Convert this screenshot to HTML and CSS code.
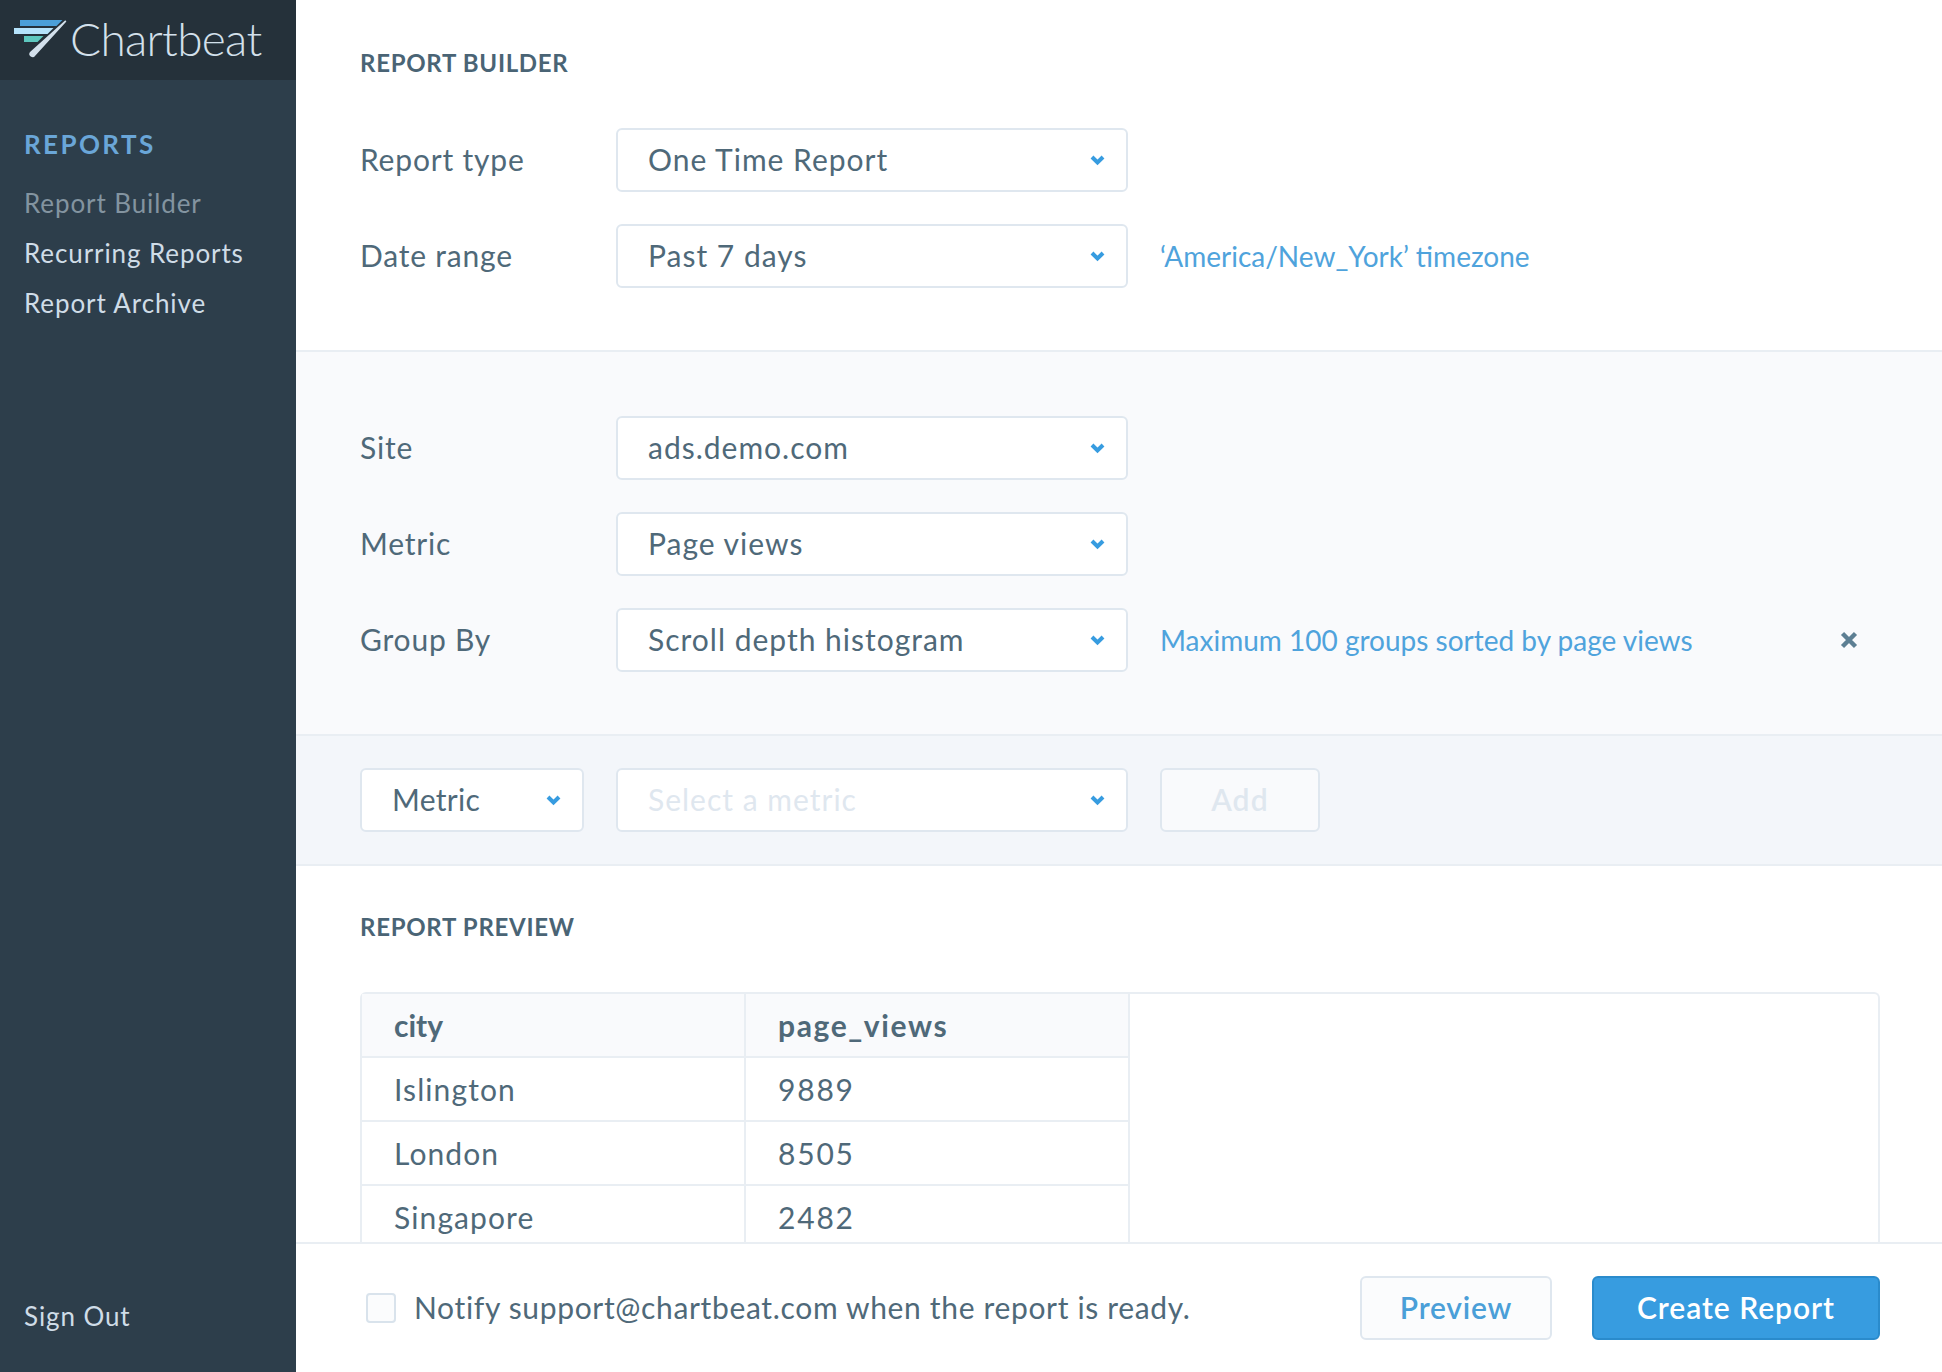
FILE: index.html
```html
<!DOCTYPE html>
<html lang="en">
<head>
<meta charset="utf-8">
<title>Chartbeat Report Builder</title>
<link rel="stylesheet" href="styles.css">
</head>
<body>
<div class="app">
  <aside class="sidebar">
    <div class="brand">
      <svg class="brand-mark" viewBox="14 20 54 40" width="54" height="40" aria-hidden="true">
        <polygon points="20,20 62.5,20 56.5,26 20,26" fill="#4b9fd8"/>
        <polygon points="14,28 53.5,28 47.5,34 14,34" fill="#b5e3fb"/>
        <polygon points="24,36 43.5,36 37.5,42 24,42" fill="#5ec8bf"/>
        <path d="M65.3 20.3 L66.4 21.4 L35.2 55.8 A3.2 3.2 0 0 1 30 52 Z" fill="#d3e0eb"/>
      </svg>
      <span class="brand-name">Chartbeat</span>
    </div>
    <nav class="nav">
      <div class="nav-heading">REPORTS</div>
      <a class="nav-link nav-link-active">Report Builder</a>
      <a class="nav-link">Recurring Reports</a>
      <a class="nav-link">Report Archive</a>
    </nav>
    <a class="nav-link sign-out">Sign Out</a>
  </aside>
  <main class="main">
    <div class="scroll">
      <section class="section">
        <h2 class="section-title">REPORT BUILDER</h2>
        <div class="rows">
          <div class="row">
            <label class="row-label">Report type</label>
            <div class="select select-wide"><span>One Time Report</span><svg class="chev" viewBox="0 0 15 11"><path d="M2 2 L7.5 7.5 L13 2"/></svg></div>
          </div>
          <div class="row">
            <label class="row-label">Date range</label>
            <div class="select select-wide"><span>Past 7 days</span><svg class="chev" viewBox="0 0 15 11"><path d="M2 2 L7.5 7.5 L13 2"/></svg></div>
            <span class="hint">‘America/New_York’ timezone</span>
          </div>
        </div>
      </section>
      <section class="section section-soft">
        <div class="rows">
          <div class="row">
            <label class="row-label">Site</label>
            <div class="select select-wide"><span>ads.demo.com</span><svg class="chev" viewBox="0 0 15 11"><path d="M2 2 L7.5 7.5 L13 2"/></svg></div>
          </div>
          <div class="row">
            <label class="row-label">Metric</label>
            <div class="select select-wide"><span>Page views</span><svg class="chev" viewBox="0 0 15 11"><path d="M2 2 L7.5 7.5 L13 2"/></svg></div>
          </div>
          <div class="row">
            <label class="row-label">Group By</label>
            <div class="select select-wide"><span>Scroll depth histogram</span><svg class="chev" viewBox="0 0 15 11"><path d="M2 2 L7.5 7.5 L13 2"/></svg></div>
            <span class="hint">Maximum 100 groups sorted by page views</span>
            <svg class="close" viewBox="0 0 20 20" aria-hidden="true"><path d="M3.5 3.5 L16.5 16.5 M16.5 3.5 L3.5 16.5"/></svg>
          </div>
        </div>
      </section>
      <section class="add-bar">
        <div class="select select-small select-tight"><span>Metric</span><svg class="chev" viewBox="0 0 15 11"><path d="M2 2 L7.5 7.5 L13 2"/></svg></div>
        <div class="select select-wide select-empty"><span>Select a metric</span><svg class="chev" viewBox="0 0 15 11"><path d="M2 2 L7.5 7.5 L13 2"/></svg></div>
        <button class="btn btn-add">Add</button>
      </section>
      <section class="preview">
        <h2 class="section-title">REPORT PREVIEW</h2>
        <div class="table-box">
          <table class="table">
            <thead><tr><th>city</th><th>page_views</th></tr></thead>
            <tbody>
              <tr><td>Islington</td><td class="num">9889</td></tr>
              <tr><td>London</td><td class="num">8505</td></tr>
              <tr><td>Singapore</td><td class="num">2482</td></tr>
            </tbody>
          </table>
        </div>
      </section>
    </div>
    <footer class="footer">
      <span class="checkbox"></span>
      <span class="notify">Notify support@chartbeat.com when the report is ready.</span>
      <button class="btn btn-preview">Preview</button>
      <button class="btn btn-primary">Create Report</button>
    </footer>
  </main>
</div>
</body>
</html>
```
FILE: styles.css
```css
* { box-sizing: border-box; }
html, body { margin: 0; height: 100%; }
body {
  font-family: "Lato", "Open Sans", sans-serif;
  color: #4f6979;
  background: #fff;
  overflow: hidden;
}
.app { display: flex; height: 100vh; }

.sidebar {
  width: 296px;
  flex: none;
  display: flex;
  flex-direction: column;
  background: #2d3e4b;
}
.brand {
  height: 80px;
  flex: none;
  display: flex;
  align-items: center;
  gap: 2px;
  padding-left: 14px;
  background: #25313a;
}
.brand-mark { flex: none; }
.brand-name {
  font-size: 46px;
  font-weight: 300;
  letter-spacing: -0.7px;
  color: #d3e0eb;
  line-height: 1;
  padding-bottom: 2px;
}
.nav {
  flex: 1;
  display: flex;
  flex-direction: column;
  padding: 46px 24px 0;
}
.nav-heading {
  font-size: 26px;
  font-weight: 700;
  letter-spacing: 2.4px;
  line-height: 36px;
  color: #6aa6d8;
  margin-bottom: 16px;
}
.nav-link {
  font-size: 26px;
  line-height: 50px;
  color: #cfdce7;
  letter-spacing: 0.9px;
}
.nav-link-active { color: #8394a0; }
.sign-out { padding: 0 24px 31px; }

.main {
  flex: 1;
  min-width: 0;
  display: flex;
  flex-direction: column;
}
.scroll { flex: 1; min-height: 0; overflow: hidden; }

.section { padding: 48px 62px 62px 64px; border-bottom: 2px solid #e9eef3; }
.section-soft { padding-top: 64px; background: #f9fafc; }
.section-title {
  margin: 0 0 50px;
  font-size: 24px;
  font-weight: 700;
  letter-spacing: 0.7px;
  line-height: 30px;
  color: #4a6475;
}
.rows { display: flex; flex-direction: column; gap: 32px; }
.row { display: flex; align-items: center; height: 64px; }
.row-label {
  width: 256px;
  flex: none;
  font-size: 30px;
  letter-spacing: 0.8px;
  padding-bottom: 2px;
}
.select {
  display: flex;
  align-items: center;
  justify-content: space-between;
  height: 64px;
  padding: 0 21px 0 30px;
  background: #fff;
  border: 2px solid #dfe7ef;
  border-radius: 6px;
  font-size: 30px;
  letter-spacing: 1px;
  flex: none;
}
.select span { padding-bottom: 2px; }
.select-wide { width: 512px; }
.select-small { width: 224px; }
.select-tight { letter-spacing: 0.3px; }
.select-empty { color: #dfe7ef; }
.chev { width: 15px; height: 11px; flex: none; margin-top: 1px; }
.chev path { fill: none; stroke: #379ce0; stroke-width: 4; }
.hint { margin-left: 32px; flex: 1; font-size: 28px; color: #4fa3dc; }
.close { width: 20px; height: 20px; margin-right: 21px; flex: none; }
.close path { fill: none; stroke: #5d7f93; stroke-width: 4.4; }

.add-bar {
  display: flex;
  gap: 32px;
  height: 130px;
  padding: 32px 64px;
  background: #f3f6fa;
  border-bottom: 2px solid #e9eef3;
}
.btn {
  height: 64px;
  border: 2px solid #dfe7ef;
  border-radius: 6px;
  background: #f9fafc;
  font-family: inherit;
  font-size: 30px;
  font-weight: 600;
  padding: 0 0 2px;
}
.btn-add { width: 160px; color: #dfe7ef; letter-spacing: 1.2px; }

.preview { padding: 46px 62px 0 64px; }
.table-box {
  height: 300px;
  border: 2px solid #e9eef3;
  border-bottom: 0;
  border-radius: 6px 6px 0 0;
}
.table { border-collapse: separate; border-spacing: 0; width: 768px; table-layout: fixed; }
.table th, .table td {
  height: 64px;
  padding: 0 0 0 32px;
  text-align: left;
  font-size: 30px;
  letter-spacing: 1.1px;
  border-bottom: 2px solid #e9eef3;
  border-right: 2px solid #e9eef3;
}
.table th { background: #f9fafc; font-weight: 700; letter-spacing: 1.6px; }
.table th:first-child { letter-spacing: 0; }
.table .num { letter-spacing: 1.8px; }

.footer {
  height: 130px;
  flex: none;
  display: flex;
  align-items: center;
  padding: 0 62px 0 70px;
  border-top: 2px solid #e9eef3;
}
.checkbox {
  width: 30px;
  height: 30px;
  flex: none;
  border: 2px solid #d9e3ec;
  border-radius: 4px;
  background: #fbfcfd;
}
.notify {
  margin-left: 18px;
  flex: 1;
  font-size: 30px;
  letter-spacing: 0.66px;
  padding-bottom: 2px;
}
.btn-preview {
  width: 192px;
  margin-right: 40px;
  color: #4a9fd8;
  background: #fbfcfd;
  letter-spacing: 0.8px;
}
.btn-primary {
  width: 288px;
  color: #fff;
  background: #379ce0;
  border: 2px solid #2a8bcc;
  letter-spacing: 0.95px;
}
```
